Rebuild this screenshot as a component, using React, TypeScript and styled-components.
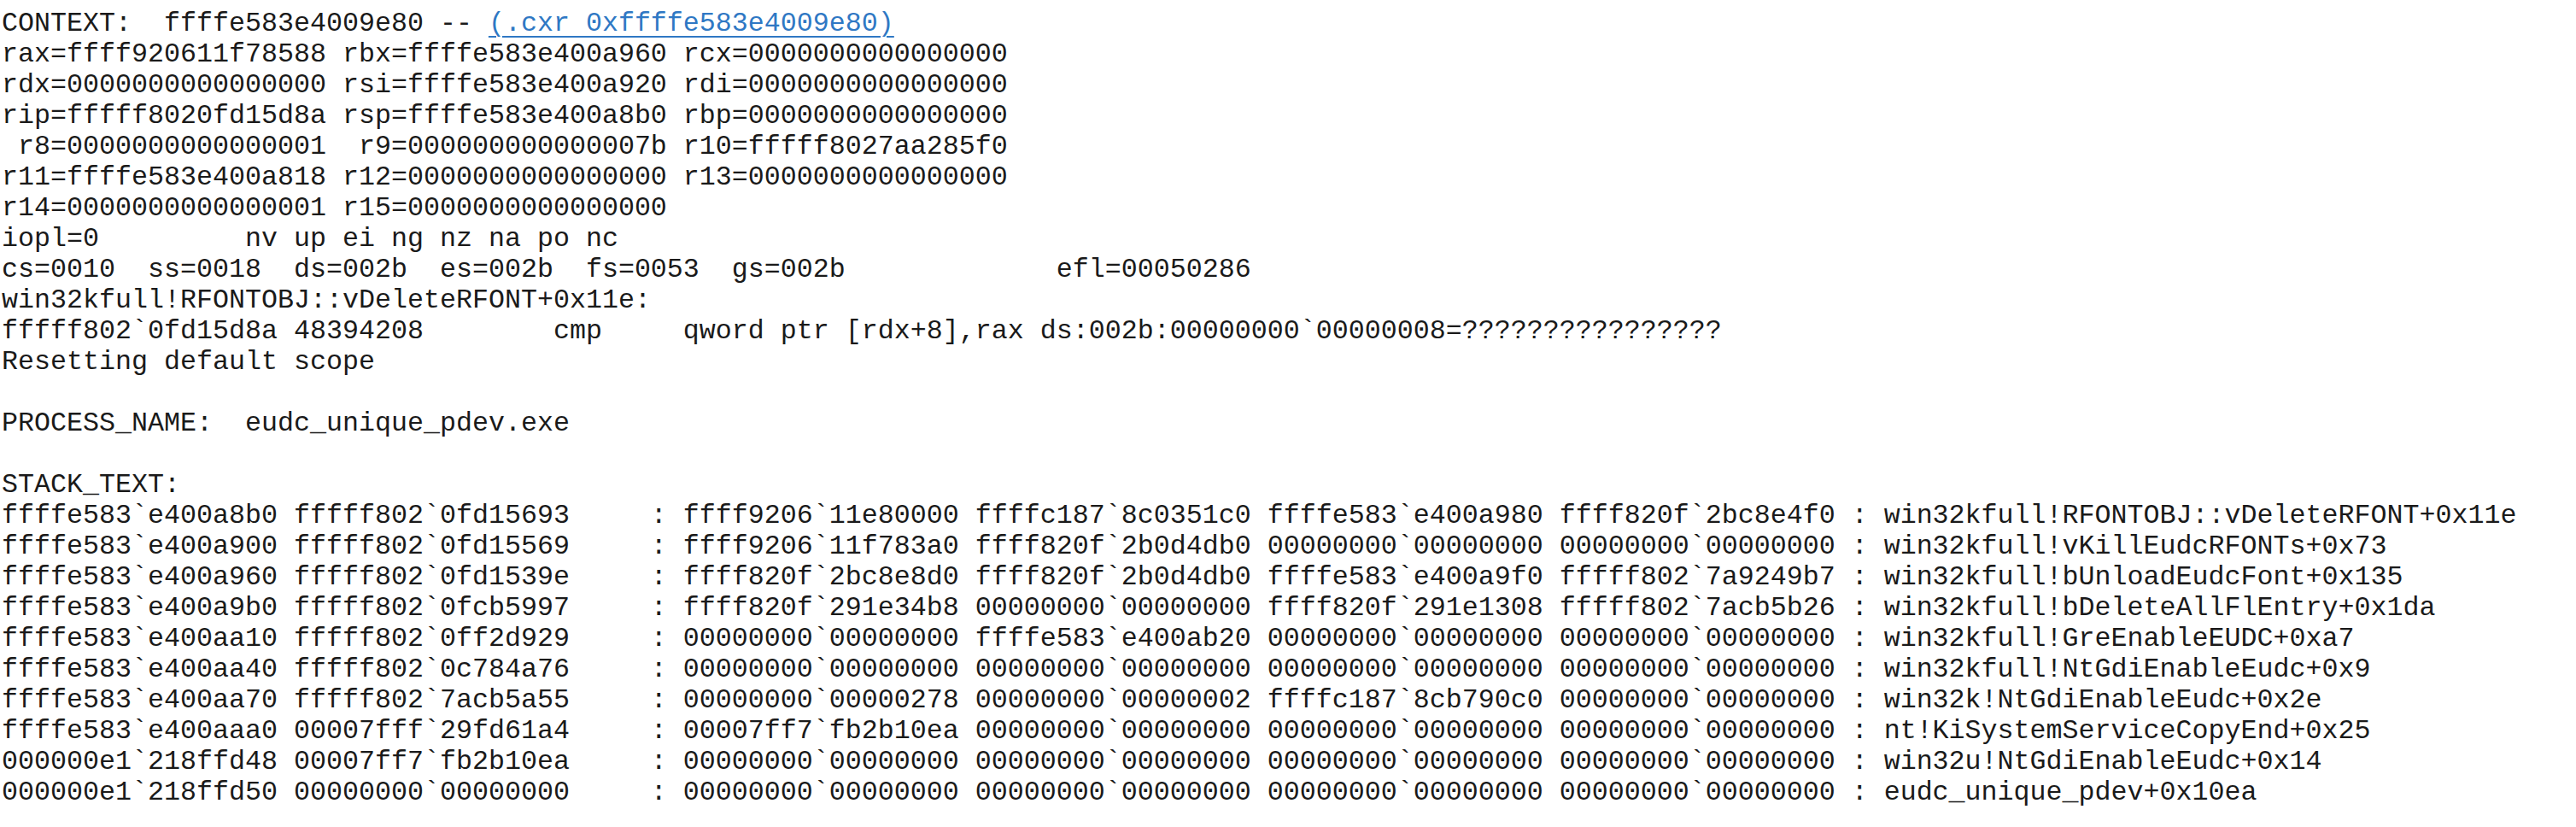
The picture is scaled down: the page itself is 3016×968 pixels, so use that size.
import React from "react";
import styled, { createGlobalStyle } from "styled-components";

const GlobalStyle = createGlobalStyle`
  html, body {
    margin: 0;
    padding: 0;
    background: #ffffff;
  }
`;

const Console = styled.div`
  display: flex;
  flex-direction: column;
  padding: 10px 0 0 2px;
  font-family: "Courier New", "Liberation Mono", monospace;
  font-size: 31.67px;
  line-height: 36px;
  color: #1a1a1a;
  background: #ffffff;
`;

const Line = styled.div`
  white-space: pre;
  height: 36px;
`;

const CmdLink = styled.span`
  color: #2f78c4;
  text-decoration: underline;
  text-decoration-thickness: 2px;
  text-underline-offset: 6px;
`;

const lines: string[] = [
  "rax=ffff920611f78588 rbx=ffffe583e400a960 rcx=0000000000000000",
  "rdx=0000000000000000 rsi=ffffe583e400a920 rdi=0000000000000000",
  "rip=fffff8020fd15d8a rsp=ffffe583e400a8b0 rbp=0000000000000000",
  " r8=0000000000000001  r9=000000000000007b r10=fffff8027aa285f0",
  "r11=ffffe583e400a818 r12=0000000000000000 r13=0000000000000000",
  "r14=0000000000000001 r15=0000000000000000",
  "iopl=0         nv up ei ng nz na po nc",
  "cs=0010  ss=0018  ds=002b  es=002b  fs=0053  gs=002b             efl=00050286",
  "win32kfull!RFONTOBJ::vDeleteRFONT+0x11e:",
  "fffff802`0fd15d8a 48394208        cmp     qword ptr [rdx+8],rax ds:002b:00000000`00000008=????????????????",
  "Resetting default scope",
  "",
  "PROCESS_NAME:  eudc_unique_pdev.exe",
  "",
  "STACK_TEXT:  ",
  "ffffe583`e400a8b0 fffff802`0fd15693     : ffff9206`11e80000 ffffc187`8c0351c0 ffffe583`e400a980 ffff820f`2bc8e4f0 : win32kfull!RFONTOBJ::vDeleteRFONT+0x11e",
  "ffffe583`e400a900 fffff802`0fd15569     : ffff9206`11f783a0 ffff820f`2b0d4db0 00000000`00000000 00000000`00000000 : win32kfull!vKillEudcRFONTs+0x73",
  "ffffe583`e400a960 fffff802`0fd1539e     : ffff820f`2bc8e8d0 ffff820f`2b0d4db0 ffffe583`e400a9f0 fffff802`7a9249b7 : win32kfull!bUnloadEudcFont+0x135",
  "ffffe583`e400a9b0 fffff802`0fcb5997     : ffff820f`291e34b8 00000000`00000000 ffff820f`291e1308 fffff802`7acb5b26 : win32kfull!bDeleteAllFlEntry+0x1da",
  "ffffe583`e400aa10 fffff802`0ff2d929     : 00000000`00000000 ffffe583`e400ab20 00000000`00000000 00000000`00000000 : win32kfull!GreEnableEUDC+0xa7",
  "ffffe583`e400aa40 fffff802`0c784a76     : 00000000`00000000 00000000`00000000 00000000`00000000 00000000`00000000 : win32kfull!NtGdiEnableEudc+0x9",
  "ffffe583`e400aa70 fffff802`7acb5a55     : 00000000`00000278 00000000`00000002 ffffc187`8cb790c0 00000000`00000000 : win32k!NtGdiEnableEudc+0x2e",
  "ffffe583`e400aaa0 00007fff`29fd61a4     : 00007ff7`fb2b10ea 00000000`00000000 00000000`00000000 00000000`00000000 : nt!KiSystemServiceCopyEnd+0x25",
  "000000e1`218ffd48 00007ff7`fb2b10ea     : 00000000`00000000 00000000`00000000 00000000`00000000 00000000`00000000 : win32u!NtGdiEnableEudc+0x14",
  "000000e1`218ffd50 00000000`00000000     : 00000000`00000000 00000000`00000000 00000000`00000000 00000000`00000000 : eudc_unique_pdev+0x10ea",
];

export default function App() {
  return (
    <>
      <GlobalStyle />
      <Console>
        <Line>
          {"CONTEXT:  ffffe583e4009e80 -- "}
          <CmdLink>(.cxr 0xffffe583e4009e80)</CmdLink>
        </Line>
        {lines.map((text, i) => (
          <Line key={i}>{text}</Line>
        ))}
      </Console>
    </>
  );
}
